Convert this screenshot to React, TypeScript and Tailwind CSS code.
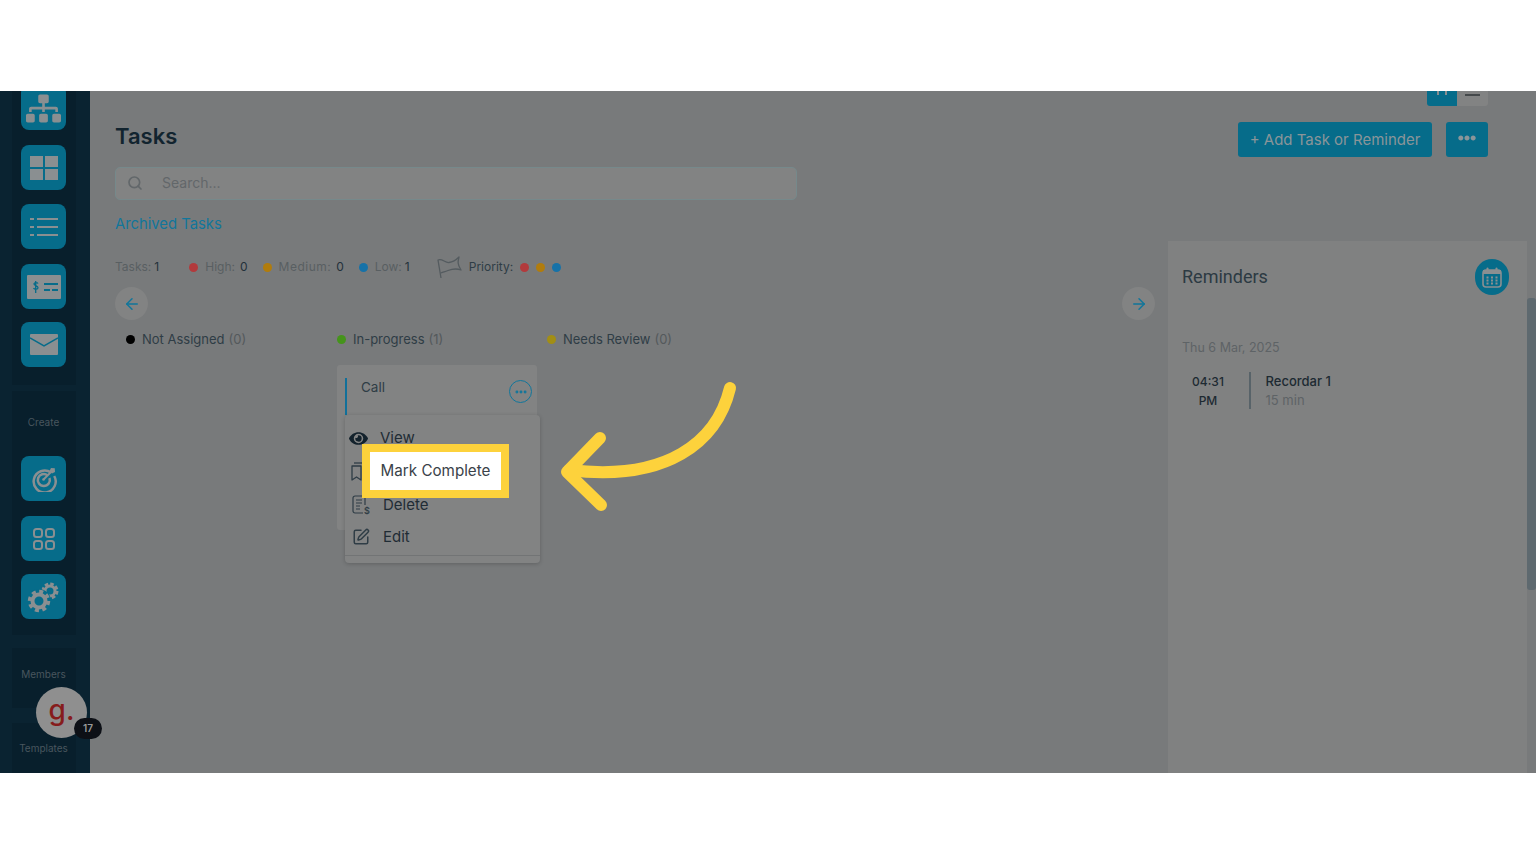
import React from 'react';
import { ArrowLeft, ArrowRight, Ellipsis, Search, SquarePen } from 'lucide-react';
import { FaEllipsisH, FaEye, FaSitemap } from 'react-icons/fa';

const Tile: React.FC<{ className?: string; children: React.ReactNode }> = ({ className = '', children }) => (
  <div className={`w-[45px] h-[45px] shrink-0 rounded-[8px] bg-[#066c8a] flex items-center justify-center text-[#8a8f91] ${className}`}>
    {children}
  </div>
);

const Dot: React.FC<{ color: string }> = ({ color }) => (
  <span className={`w-[9px] h-[9px] rounded-full inline-block ${color}`} />
);

const GridIcon = () => (
  <svg width="28" height="24" viewBox="0 0 28 24" fill="currentColor">
    <rect x="0" y="0" width="13" height="11" />
    <rect x="15" y="0" width="13" height="11" />
    <rect x="0" y="13" width="13" height="11" />
    <rect x="15" y="13" width="13" height="11" />
  </svg>
);

const ListIcon = () => (
  <svg width="28" height="20" viewBox="0 0 28 20" fill="currentColor">
    <rect x="0" y="1" width="4" height="2" />
    <rect x="7" y="1" width="21" height="2" />
    <rect x="0" y="9" width="4" height="2" />
    <rect x="7" y="9" width="21" height="2" />
    <rect x="0" y="17" width="4" height="2" />
    <rect x="7" y="17" width="21" height="2" />
  </svg>
);

const BillIcon = () => (
  <svg width="34" height="24" viewBox="0 0 34 24">
    <rect width="34" height="24" rx="1" fill="currentColor" />
    <rect x="17" y="8" width="14" height="2" fill="#066c8a" />
    <rect x="17" y="14" width="6" height="2" fill="#066c8a" />
    <rect x="25" y="14" width="6" height="2" fill="#066c8a" />
    <path d="M11 8.500c-.6-1-3.500-1.400-4 .2-.5 2.200 4 1.600 4 4 0 1.800-3.400 2-4.500.5M8.700 6v12" fill="none" stroke="#066c8a" strokeWidth="1.300" />
  </svg>
);

const MailIcon = () => (
  <svg width="28" height="21" viewBox="0 0 28 21">
    <rect width="28" height="21" rx="1" fill="currentColor" />
    <path d="M0 4l14 8 14-8" fill="none" stroke="#066c8a" strokeWidth="1.500" />
  </svg>
);

const TargetIcon = () => (
  <svg width="26" height="26" viewBox="0 0 26 26" fill="none" stroke="currentColor" strokeWidth="2.500">
    <path d="M20 6.500A11 11 0 1 0 23.200 10" />
    <path d="M16.500 9.200A6 6 0 1 0 18.500 12" />
    <path d="M12.500 13.500L21 5" strokeWidth="2" />
    <path d="M20 2l3.800.2.200 3.800-3 1.500-2.500-2.500z" fill="currentColor" stroke="none" />
    <circle cx="12.500" cy="13.500" r="1.300" fill="currentColor" stroke="none" />
  </svg>
);

const AppsIcon = () => (
  <svg width="22" height="22" viewBox="0 0 22 22" fill="none" stroke="currentColor" strokeWidth="2">
    <rect x="1" y="1" width="8" height="8" rx="2.500" />
    <rect x="13" y="1" width="8" height="8" rx="2.500" />
    <rect x="1" y="13" width="8" height="8" rx="2.500" />
    <rect x="13" y="13" width="8" height="8" rx="2.500" />
  </svg>
);

// one big gear lower left, a smaller one behind it upper right
const GearsIcon = () => (
  <svg width="33" height="32" viewBox="0 0 33 32" fill="none" stroke="currentColor">
    <circle cx="23" cy="10" r="7" strokeWidth="3" strokeDasharray="3.500 2" />
    <circle cx="23" cy="10" r="5" strokeWidth="3" />
    <circle cx="12" cy="20" r="12" fill="#066c8a" stroke="none" />
    <circle cx="12" cy="20" r="9.500" strokeWidth="3.500" strokeDasharray="4 3.450" />
    <circle cx="12" cy="20" r="6.500" strokeWidth="4" />
  </svg>
);

const CalendarIcon = () => (
  <svg width="20" height="21" viewBox="0 0 20 21" fill="none">
    <rect x="1" y="3" width="18" height="17" rx="3" stroke="#8a8f91" strokeWidth="1.600" />
    <rect x="1" y="3" width="18" height="4" fill="#8a8f91" />
    <rect x="4.500" y="0.500" width="2" height="4" rx="1" fill="#8a8f91" />
    <rect x="13.500" y="0.500" width="2" height="4" rx="1" fill="#8a8f91" />
    <path d="M4.500 10.500h2M9 10.500h2M13.500 10.500h2M4.500 13.500h2M9 13.500h2M13.500 13.500h2M4.500 16.500h2M9 16.500h2M13.500 16.500h2" stroke="#8a8f91" strokeWidth="2" />
  </svg>
);

const FlagIcon = () => (
  <svg width="26" height="24" viewBox="0 0 26 24" fill="none" stroke="#545b5f" strokeWidth="1.300" strokeLinejoin="round" className="ml-[26px] shrink-0">
    <path d="M5 23L2 5C6 3 9 8 13 7.500S20 5 23 2C22 6 21 9 25 15C20 13 16 14 12 15.500S7 17 5 18" />
  </svg>
);

const BookmarkIcon = () => (
  <svg width="13" height="19" viewBox="0 0 13 19" fill="none" stroke="#2f3d46" strokeWidth="1.300" strokeLinejoin="round">
    <path d="M3 1h9" />
    <path d="M1 4h9v14l-4.500-3L1 18z" />
  </svg>
);

const BillDocIcon = () => (
  <svg width="18" height="20" viewBox="0 0 18 20" fill="none" stroke="#2f3d46" strokeWidth="1.200" strokeLinejoin="round">
    <path d="M11 18H3a2 2 0 0 1-2-2V3a2 2 0 0 1 2-2h8a2 2 0 0 1 2 2v7" />
    <path d="M4 5h6M4 8h6M4 11h4M4 14h4" />
    <text x="12" y="19" fontSize="9" fontWeight="600" fill="#2f3d46" stroke="none" fontFamily="Inter, sans-serif">$</text>
  </svg>
);

const Sidebar = () => (
  <div className="w-[90px] shrink-0 bg-[#0a2331] pr-[3px] flex flex-col items-center overflow-hidden">
    <div className="w-[64px] shrink-0 bg-[#081f2c] flex flex-col items-center h-[300px] -mt-[6px]">
      <Tile><FaSitemap size={35} className="mt-[2px]" /></Tile>
      <Tile className="mt-[15px]"><GridIcon /></Tile>
      <Tile className="mt-[14px]"><ListIcon /></Tile>
      <Tile className="mt-[15px]"><BillIcon /></Tile>
      <Tile className="mt-[13px]"><MailIcon /></Tile>
    </div>
    <div className="w-[64px] shrink-0 bg-[#081f2c] mt-[6px] h-[244px] flex flex-col items-center">
      <p className="mt-[24px] text-[10px] leading-[14px] text-[#48565e]">Create</p>
      <Tile className="mt-[27px]"><TargetIcon /></Tile>
      <Tile className="mt-[15px]"><AppsIcon /></Tile>
      <Tile className="mt-[13px]"><GearsIcon /></Tile>
    </div>
    <div className="w-[64px] shrink-0 bg-[#081f2c] mt-[13px] h-[60px] flex flex-col items-center">
      <p className="mt-[19px] text-[10px] leading-[14px] text-[#48565e]">Members</p>
    </div>
    <div className="w-[64px] shrink-0 bg-[#081f2c] mt-[15px] flex-1 flex flex-col items-center">
      <p className="mt-[18px] text-[10px] leading-[14px] text-[#48565e]">Templates</p>
    </div>
  </div>
);

const Stat: React.FC<{ color: string; label: string; value: string; className?: string; labelClass?: string; valueClass?: string }> = ({
  color,
  label,
  value,
  className = '',
  labelClass = '',
  valueClass = 'ml-[5px]',
}) => (
  <div className={`flex items-center ${className}`}>
    <Dot color={color} />
    <span className={`ml-[7px] text-[#595f62] ${labelClass}`}>{label}</span>
    <span className={`text-[#23313a] ${valueClass}`}>{value}</span>
  </div>
);

const Column: React.FC<{ color: string; label: string; count: string; className?: string }> = ({ color, label, count, className = '' }) => (
  <div className={`flex items-center text-[13px] leading-[18px] ${className}`}>
    <Dot color={color} />
    <span className="ml-[7px] text-[#2f3d46]">{label}</span>
    <span className="ml-[4px] text-[#54595c]">({count})</span>
  </div>
);

const TaskBoard = () => (
  <div className="flex-1 min-w-0 pl-[25px] flex flex-col">
    <h1 className="mt-[32px] text-[22px] leading-[26px] font-semibold text-[#12242f]">Tasks</h1>
    <div className="mt-[18px] w-[682px] h-[33px] rounded-[5px] bg-[#828383] border border-[#76898b] flex items-center text-[#62676a] pb-[2px]">
      <Search size={16} strokeWidth={2.500} className="ml-[11px]" />
      <span className="ml-[19px] text-[14px]">Search...</span>
    </div>
    <p className="mt-[14px] text-[14.800px] leading-[20px] text-[#11769b]">Archived Tasks</p>
    <div className="mt-[21px] h-[24px] flex items-center text-[12px]">
      <span className="text-[#595f62]">Tasks:</span>
      <span className="ml-[3px] text-[#23313a]">1</span>
      <Stat color="bg-[#b23a3c]" label="High:" value="0" className="ml-[30px]" />
      <Stat color="bg-[#b17c0c]" label="Medium:" value="0" className="ml-[15px]" labelClass="tracking-[0.5px]" />
      <Stat color="bg-[#1672a8]" label="Low:" value="1" className="ml-[15px]" valueClass="ml-[3px]" />
      <FlagIcon />
      <span className="ml-[7px] text-[#2f3d46]">Priority:</span>
      <span className="ml-[7px] flex gap-[7px]">
        <Dot color="bg-[#b23a3c]" />
        <Dot color="bg-[#b17c0c]" />
        <Dot color="bg-[#1672a8]" />
      </span>
    </div>
    <div className="mt-[8px] pr-[13px] flex justify-between">
      <div className="w-[33px] h-[33px] rounded-full bg-[#828383] flex items-center justify-center text-[#11769b]"><ArrowLeft size={18} /></div>
      <div className="w-[33px] h-[33px] rounded-full bg-[#828383] flex items-center justify-center text-[#11769b]"><ArrowRight size={18} /></div>
    </div>
    <div className="mt-[10px] flex pl-[11px]">
      <Column color="bg-black" label="Not Assigned" count="0" className="w-[211px]" />
      <Column color="bg-[#45941b]" label="In-progress" count="1" className="w-[210px]" />
      <Column color="bg-[#a28e14]" label="Needs Review" count="0" />
    </div>
    <div className="mt-[17px] ml-[222px] w-[200px] h-[165px] bg-[#828383] rounded-[3px] flex items-start">
      <div className="ml-[8px] mt-[13px] w-[2px] h-[37px] bg-[#11709a]" />
      <span className="ml-[14px] mt-[13px] text-[13.500px] leading-[18px] text-[#2f3d46]">Call</span>
      <div className="ml-auto mr-[5px] mt-[15px] w-[23px] h-[23px] rounded-full border-[1.500px] border-[#11769b] flex items-center justify-center text-[#11769b]">
        <Ellipsis size={14} strokeWidth={3} />
      </div>
    </div>
  </div>
);

const Reminders = () => (
  <div className="w-[368px] shrink-0 flex flex-col">
    <div className="h-[150px] shrink-0 flex flex-col items-end pr-[48px]">
      <div className="flex h-[15px] w-[61px] rounded-b-[3px] overflow-hidden">
        <div className="w-[30px] bg-[#066c8a] flex justify-center gap-[6px]">
          <span className="w-[2px] h-[4px] bg-[#8a8f91]" />
          <span className="w-[2px] h-[4px] bg-[#8a8f91]" />
        </div>
        <div className="flex-1 bg-[#828383] flex justify-center"><span className="mt-[3px] w-[15px] h-[2px] bg-[#45494b]" /></div>
      </div>
      <div className="mt-[16px] flex gap-[14px]">
        <div className="w-[194px] h-[35px] rounded-[3px] bg-[#066c8a] flex items-center justify-center text-[15px] text-[#8a9599] pt-[1px]">+ Add Task or Reminder</div>
        <div className="w-[42px] h-[35px] rounded-[3px] bg-[#066c8a] flex items-center justify-center text-[#8a9599]"><FaEllipsisH size={18} className="-mt-[3px]" /></div>
      </div>
    </div>
    <div className="flex-1 flex">
      <div className="flex-1 bg-[#808181] pl-[14px] pr-[18px]">
        <div className="mt-[18px] flex items-center justify-between">
          <span className="font-['Roboto',sans-serif] text-[18px] leading-[34px] text-[#2c3a43]">Reminders</span>
          <div className="w-[34px] h-[36px] rounded-full bg-[#066c8a] flex items-center justify-center"><CalendarIcon /></div>
        </div>
        <p className="mt-[44px] text-[12.500px] leading-[18px] text-[#5e6366]">Thu 6 Mar, 2025</p>
        <div className="mt-[15px] flex">
          <div className="w-[52px] text-center text-[12px] leading-[19px] font-medium text-[#1d2a32]">04:31<br />PM</div>
          <div className="ml-[15px] w-[1.500px] h-[37px] bg-[#586369]" />
          <div className="ml-[15px] text-[13px] leading-[19px]">
            <p className="font-medium text-[#1d2a32]">Recordar 1</p>
            <p className="text-[#5e6366]">15 min</p>
          </div>
        </div>
      </div>
      <div className="w-[9px] shrink-0" />
    </div>
  </div>
);

const ActionMenu = () => (
  <div className="absolute left-[345px] top-[324px] w-[195px] h-[148px] rounded-[4px] bg-[#828383] shadow-[0_1px_4px_rgba(0,0,0,0.2)] text-[15px] leading-[20px] text-[#1f2c35]">
    <div className="absolute left-[4px] top-[13px] flex items-center gap-[12px]"><FaEye size={19} className="text-[#13222c]" /><span>View</span></div>
    <div className="absolute left-[6px] top-[47px]"><BookmarkIcon /></div>
    <div className="absolute left-[7px] top-[80px] flex items-center gap-[13px]"><BillDocIcon /><span>Delete</span></div>
    <div className="absolute left-[7px] top-[112px] flex items-center gap-[13px]"><SquarePen size={18} className="text-[#2f3d46]" /><span>Edit</span></div>
    <div className="absolute left-0 right-0 top-[140px] h-px bg-[#727475]" />
  </div>
);

export default function App() {
  return (
    <div className="h-screen bg-white flex flex-col font-['Inter',sans-serif] overflow-hidden">
      <div className="h-[91px] shrink-0" />
      <div className="relative h-[682px] shrink-0 flex bg-[#787a7b] overflow-hidden">
        <Sidebar />
        <TaskBoard />
        <Reminders />
        {/* scrollbar thumb */}
        <div className="absolute right-0 top-[207px] w-[9px] h-[292px] rounded-[3px] bg-[#5e696f]" />
        <ActionMenu />
        {/* avatar */}
        <div className="absolute left-[36px] top-[596px] w-[51px] h-[51px] rounded-full bg-[#8f8f8f] flex items-center justify-center text-[28px] font-medium leading-none text-[#861c1c] pb-[6px]">g.</div>
        <div className="absolute left-[74px] top-[627px] w-[28px] h-[21px] rounded-full bg-[#0d1016] flex items-center justify-center text-[10px] font-semibold text-[#9a9a9a]">17</div>
        {/* highlighted step */}
        <div className="absolute left-[362px] top-[353px] w-[147px] h-[54px] border-[8px] border-[#fdd23c] bg-white flex items-center justify-center text-[15.200px] text-[#3a4249]">Mark Complete</div>
        <svg className="absolute left-[555px] top-[285px]" width="190" height="140" viewBox="0 0 190 140" fill="none" stroke="#fdd23c" strokeWidth="12" strokeLinecap="round" strokeLinejoin="round">
          <path d="M175 12C162 66 112 106 14 94" />
          <path d="M45 62L12 96L46 129" />
        </svg>
      </div>
      <div className="flex-1" />
    </div>
  );
}
